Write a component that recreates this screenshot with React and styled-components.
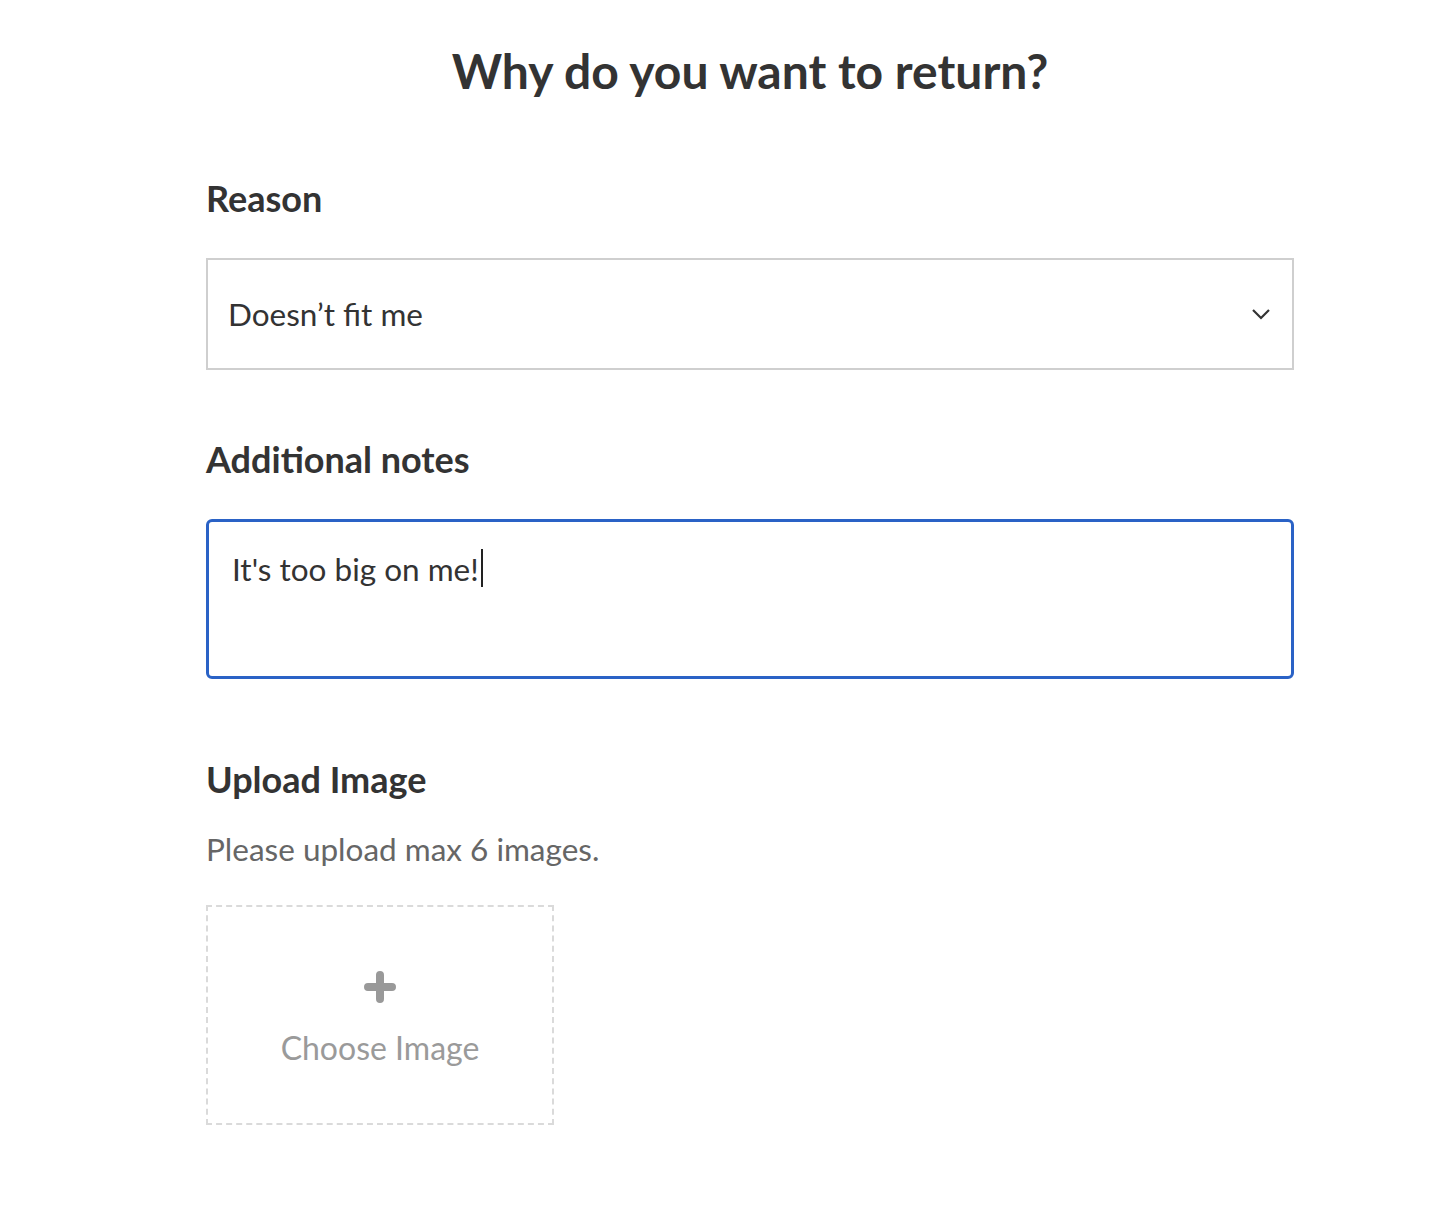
import React from "react";
import styled, { createGlobalStyle } from "styled-components";

const Global = createGlobalStyle`
  html, body { margin: 0; padding: 0; background: #fff; }
  body { font-family: Lato, "Open Sans", sans-serif; color: #333; }
  * { box-sizing: border-box; }
`;

const Page = styled.main`
  width: 1088px;
  margin-left: 206px;
  padding-top: 41px;
  padding-bottom: 80px;
  display: flex;
  flex-direction: column;
`;

const Title = styled.h1`
  margin: 0 0 76px;
  font-size: 48px;
  line-height: 60px;
  font-weight: 700;
  text-align: center;
  color: #333;
`;

const Label = styled.h2`
  margin: 0 0 ${(p) => p.$gap || 38}px;
  font-size: 36px;
  line-height: 43px;
  font-weight: 700;
  color: #333;
`;

const Select = styled.div`
  height: 112px;
  border: 2px solid #cfcfcf;
  display: flex;
  align-items: center;
  justify-content: space-between;
  padding: 0 21px 0 20px;
  font-size: 31.5px;
  line-height: 36px;
  color: #333;
  margin-bottom: 68px;
`;

const Notes = styled.div`
  height: 160px;
  border: 3px solid #2a62c6;
  border-radius: 6px;
  padding: 29px 23px;
  font-size: 31.5px;
  line-height: 36px;
  color: #333;
  margin-bottom: 79px;
  display: flex;
  align-items: flex-start;
`;

const Caret = styled.span`
  display: inline-block;
  width: 2px;
  height: 38px;
  background: #222;
  margin-left: 2px;
  margin-top: -2px;
`;

const Help = styled.p`
  margin: 0 0 38px;
  font-size: 31.5px;
  line-height: 36px;
  color: #666;
`;

const UploadBox = styled.button`
  width: 348px;
  height: 220px;
  border: 2px dashed #dadada;
  background: #fff;
  display: flex;
  flex-direction: column;
  align-items: center;
  justify-content: center;
  gap: 26px;
  padding: 8px 0 0;
  font-family: inherit;
  font-size: 32px;
  line-height: 38px;
  color: #9a9a9a;
  cursor: pointer;
`;

const PlusIcon = () => (
  <svg width="34" height="32" viewBox="0 0 34 32">
    <path d="M17 4 V28 M5 16 H29" stroke="#999" strokeWidth="8" strokeLinecap="round" fill="none" />
  </svg>
);

const Chevron = () => (
  <svg width="20" height="12" viewBox="0 0 20 12">
    <polyline points="2,2 10,10 18,2" fill="none" stroke="#333" strokeWidth="2.2" />
  </svg>
);

export default function App() {
  return (
    <>
      <Global />
      <Page>
        <Title>Why do you want to return?</Title>
        <Label>Reason</Label>
        <Select>
          <span>Doesn’t fit me</span>
          <Chevron />
        </Select>
        <Label>Additional notes</Label>
        <Notes>
          <span>It's too big on me!</span>
          <Caret />
        </Notes>
        <Label $gap={30}>Upload Image</Label>
        <Help>Please upload max 6 images.</Help>
        <UploadBox>
          <PlusIcon />
          <span>Choose Image</span>
        </UploadBox>
      </Page>
    </>
  );
}
